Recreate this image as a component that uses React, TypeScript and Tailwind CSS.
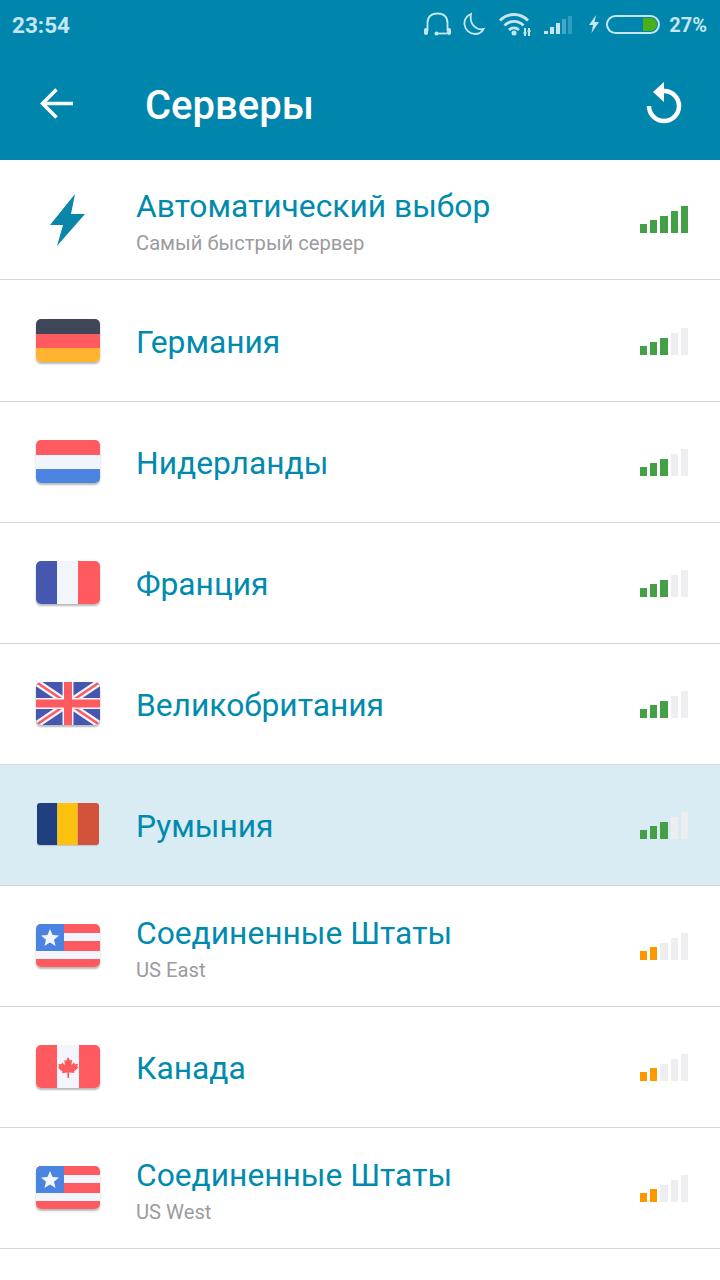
import React from 'react';

type FlagName = 'de' | 'nl' | 'fr' | 'gb' | 'ro' | 'us' | 'ca';

interface Server {
  name: string;
  subtitle?: string;
  flag?: FlagName;
  level: number;
  selected?: boolean;
  rowClass: string;
}

const servers: Server[] = [
  { name: 'Автоматический выбор', subtitle: 'Самый быстрый сервер', level: 5, rowClass: 'h-[120px]' },
  { name: 'Германия', flag: 'de', level: 3, rowClass: 'h-[122px] pt-[1px]' },
  { name: 'Нидерланды', flag: 'nl', level: 3, rowClass: 'h-[121px]' },
  { name: 'Франция', flag: 'fr', level: 3, rowClass: 'h-[121px]' },
  { name: 'Великобритания', flag: 'gb', level: 3, rowClass: 'h-[121px]' },
  { name: 'Румыния', flag: 'ro', level: 3, selected: true, rowClass: 'h-[121px]' },
  { name: 'Соединенные Штаты', subtitle: 'US East', flag: 'us', level: 2, rowClass: 'h-[121px]' },
  { name: 'Канада', flag: 'ca', level: 2, rowClass: 'h-[121px]' },
  { name: 'Соединенные Штаты', subtitle: 'US West', flag: 'us', level: 2, rowClass: 'h-[121px]' }
];

const bars = [
  'w-[7px] h-[9px]',
  'w-[7px] h-[13px]',
  'w-[8px] h-[17px]',
  'w-[7px] h-[22px]',
  'w-[7px] h-[27px]'
];

const FlagArt: React.FC<{ flag: FlagName }> = ({ flag }) => {
  switch (flag) {
    case 'de':
      return (
        <>
          <rect width="64" height="15" fill="#3f4658" />
          <rect y="15" width="64" height="14" fill="#ff5a5f" />
          <rect y="29" width="64" height="14" fill="#ffb32e" />
        </>
      );
    case 'nl':
      return (
        <>
          <rect width="64" height="15" fill="#ff5a5f" />
          <rect y="15" width="64" height="14" fill="#f3f5fc" />
          <rect y="29" width="64" height="14" fill="#4a83e0" />
        </>
      );
    case 'fr':
      return (
        <>
          <rect width="21" height="43" fill="#4557ae" />
          <rect x="21" width="22" height="43" fill="#f3f5fc" />
          <rect x="42" width="22" height="43" fill="#ff5a5f" />
        </>
      );
    case 'ro':
      return (
        <>
          <rect width="21" height="43" fill="#1f3f80" />
          <rect x="21" width="21" height="43" fill="#fcc20e" />
          <rect x="42" width="22" height="43" fill="#d2533a" />
        </>
      );
    case 'gb':
      return (
        <>
          <rect width="64" height="43" fill="#4557ae" />
          <path d="M0 0L64 43M64 0L0 43" stroke="#f3f5fc" strokeWidth="7" />
          <path d="M0 0L64 43M64 0L0 43" stroke="#ff5a5f" strokeWidth="2.500" />
          <path d="M32 0V43M0 21.500H64" stroke="#f3f5fc" strokeWidth="11" />
          <path d="M32 0V43M0 21.500H64" stroke="#ff5a5f" strokeWidth="8" />
        </>
      );
    case 'us':
      return (
        <>
          <rect width="64" height="43" fill="#ff5a5f" />
          <rect x="28" y="9" width="36" height="8" fill="#f3f5fc" />
          <rect y="27" width="64" height="8" fill="#f3f5fc" />
          <rect width="28" height="27" fill="#4a83e0" />
          <path d="M14 5l2.500 6 6.500.5-5 4.200 1.600 6.300-5.600-3.400-5.600 3.400 1.600-6.300-5-4.200 6.500-.5z" fill="#f3f5fc" />
        </>
      );
    case 'ca':
      return (
        <>
          <rect width="64" height="43" fill="#ff5a5f" />
          <rect x="21" width="22" height="43" fill="#f3f5fc" />
          <path
            d="M32 12l2.200 3.600 2-.8-.8 5 2.800-2.400.8 1.800 3-.4-.8 3 1.300.8-4.600 3.800.6 1.700-5.500-.7V33h-1.600v-5.500l-5.500.7.6-1.700-4.600-3.800 1.300-.8-.8-3 3 .4.8-1.800 2.800 2.400-.8-5 2 .8z"
            fill="#ff5a5f"
          />
        </>
      );
  }
};

const Flag: React.FC<{ flag: FlagName }> = ({ flag }) => {
  // the romanian one is a slightly smaller asset in the app
  const size =
    flag === 'ro'
      ? 'w-[62px] ml-[1px] h-[42px] rounded-[3px] shadow-[0_1px_1px_rgba(0,0,0,0.15)]'
      : 'w-16 h-[43px] rounded-[5px] shadow-[0_2px_2px_rgba(0,0,0,0.28)]';
  return (
    <div className={`${size} overflow-hidden mb-[2px]`}>
      <svg viewBox="0 0 64 43" preserveAspectRatio="none" className="block w-full h-full">
        <FlagArt flag={flag} />
      </svg>
    </div>
  );
};

const SignalBars: React.FC<{ level: number }> = ({ level }) => {
  const color = level >= 3 ? 'bg-[#43a047]' : 'bg-[#ff9800]';
  return (
    <div className="flex items-end gap-[3px]">
      {bars.map((bar, i) => (
        <div key={i} className={`${bar} ${i < level ? color : 'bg-[#eeeef0]'}`} />
      ))}
    </div>
  );
};

const StatusIcons = () => (
  <div className="flex items-center text-[#c5e6f0]">
    {/* headset */}
    <svg width="27" height="25" viewBox="0 0 27 25" fill="none" stroke="currentColor" strokeWidth="1.800">
      <path d="M3.500 19V11C3.500 5 7 1.500 13.500 1.500S23.500 5 23.500 11v8" />
      <rect x="0.500" y="16.500" width="3" height="6" rx="1" fill="currentColor" strokeWidth="1" />
      <rect x="23.500" y="16.500" width="3" height="6" rx="1" fill="currentColor" strokeWidth="1" />
      <path d="M13 21.500h10" />
      <circle cx="12.500" cy="21.500" r="2" fill="currentColor" stroke="none" />
    </svg>
    {/* moon */}
    <svg width="22" height="24" viewBox="0 0 22 24" fill="none" stroke="currentColor" strokeWidth="1.800" className="ml-[12px]">
      <path d="M8 2C3.500 4 1 8 1.500 12.500 2.200 18 7 22 12 22c4 0 7-2 8.500-5C14 18.500 6 13 8 2z" />
    </svg>
    {/* wifi */}
    <svg width="32" height="24" viewBox="0 0 32 24" fill="none" stroke="currentColor" className="ml-[14px]">
      <path d="M1 8.500C9 0.500 21 0.500 29 8.500" strokeWidth="2.800" />
      <path d="M5.500 13.500C11 8 19 8 24.500 13.500" strokeWidth="2.800" />
      <path d="M10 18c3-2.700 7-2.700 10 0" strokeWidth="2.800" />
      <circle cx="15" cy="21" r="2.500" fill="currentColor" stroke="none" />
      <path d="M26 16v8M30 16v8" strokeWidth="2" />
      <path d="M24 21h4M28 19h4" strokeWidth="1" />
    </svg>
    {/* cell signal */}
    <svg width="30" height="20" viewBox="0 0 30 20" className="ml-[13px] mt-[3px]">
      <rect x="0" y="15" width="4" height="3" fill="currentColor" />
      <rect x="6" y="11" width="4" height="7" fill="currentColor" />
      <rect x="12" y="7" width="4" height="11" fill="currentColor" />
      <rect x="18" y="3" width="4" height="15" fill="currentColor" opacity="0.35" />
      <rect x="24" y="0" width="4" height="18" fill="currentColor" opacity="0.25" />
    </svg>
    {/* charging bolt */}
    <svg width="12" height="18" viewBox="0 0 12 18" fill="currentColor" className="ml-[14px]">
      <path d="M8 0L1 10h4l-1.500 8L11 7H6.500z" />
    </svg>
    {/* battery */}
    <div className="ml-[6px] w-[54px] h-[19px] rounded-full border-2 border-[#c5e6f0] flex justify-end pr-[1px] py-[1px]">
      <div className="w-[14px] h-full bg-[#4caf1a] rounded-r-full" />
    </div>
    <span className="ml-[9px] text-[20px] font-bold leading-none mt-[2px]">27%</span>
  </div>
);

const App: React.FC = () => {
  return (
    <div className="w-[720px] h-[1280px] bg-white overflow-hidden font-['Roboto',sans-serif]">
      <div className="h-[160px] bg-[#0086ad]">
        <div className="h-[48px] pl-[12px] pr-[13px] flex items-center justify-between">
          <span className="text-[22.5px] font-bold leading-none text-[#c5e6f0] mt-[2px]">23:54</span>
          <StatusIcons />
        </div>
        <div className="h-[112px] pl-[40px] pr-[38px] flex items-center text-white">
          <svg width="33" height="31" viewBox="0 0 33 31" fill="none" stroke="white" strokeWidth="3.500" className="mb-[2px]">
            <path d="M33 15.500H3M16.500 1.500L2.500 15.500l14 14" />
          </svg>
          <h1 className="ml-[72px] text-[40px] font-medium leading-none flex-1 mt-[3px]">Серверы</h1>
          <svg width="36" height="42" viewBox="0 0 36 42" fill="none" className="mb-[2px]">
            <path d="M18 9A15 15 0 1 1 3 24" stroke="white" strokeWidth="4.500" />
            <path d="M18 0V20L7 10z" fill="white" />
          </svg>
        </div>
      </div>
      <div>
        {servers.map((server, index) => (
          <div
            key={index}
            className={`${server.rowClass} flex items-center border-b border-[#d6d6d6] pr-[32px] ${server.selected ? 'bg-[#d9ecf3]' : ''}`}
          >
            <div className="w-[136px] pl-[36px] shrink-0">
              {server.flag ? (
                <Flag flag={server.flag} />
              ) : (
                <svg width="36" height="52" viewBox="0 0 36 52" className="ml-[14px]" fill="#0a86a8">
                  <path d="M25 0L0 31h13L7 52l28-32H21z" />
                </svg>
              )}
            </div>
            <div className="flex-1 min-w-0 text-[#008bae] mt-[4px]">
              <div className="text-[31.75px] leading-[38px]">{server.name}</div>
              {server.subtitle && <div className="text-[20.2px] leading-[24px] mt-[5px] text-[#9b9ba0]">{server.subtitle}</div>}
            </div>
            <SignalBars level={server.level} />
          </div>
        ))}
      </div>
    </div>
  );
};

export default App;
